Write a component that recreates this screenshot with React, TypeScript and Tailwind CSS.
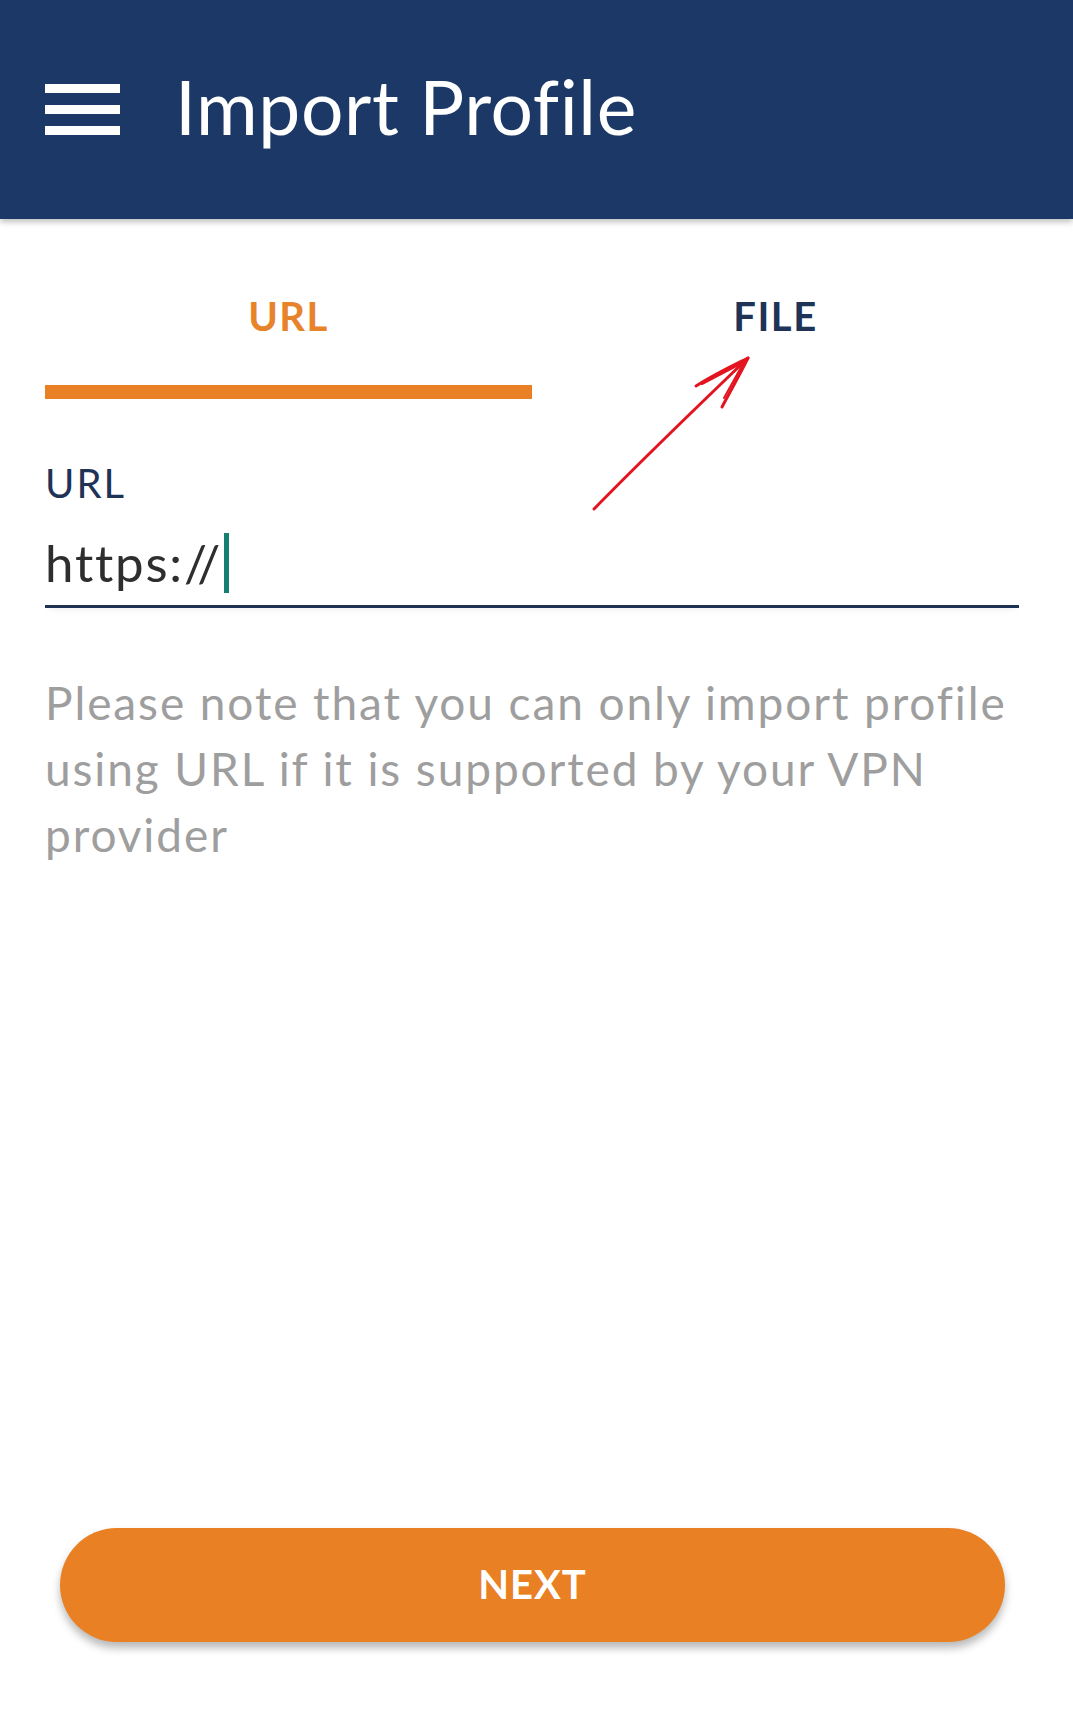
import React, { useState } from "react";

const Hamburger = () => (
  <div className="flex flex-col gap-[12px] w-[75px]">
    <span className="block h-[9px] w-full bg-white" />
    <span className="block h-[9px] w-full bg-white" />
    <span className="block h-[9px] w-full bg-white" />
  </div>
);

const Arrow = () => (
  <svg
    className="absolute left-0 top-0 pointer-events-none"
    width="1073"
    height="700"
    viewBox="0 0 1073 700"
    fill="none"
  >
    <path
      d="M594 509 C640 462 700 404 748 358"
      stroke="#e3141f"
      strokeWidth="3"
      strokeLinecap="round"
    />
    <path
      d="M696 386 C715 374 732 366 748 358 C740 374 730 392 722 407"
      stroke="#e3141f"
      strokeWidth="3"
      strokeLinecap="round"
      strokeLinejoin="round"
    />
    <path d="M702 384 L744 362 L724 398" stroke="#e3141f" strokeWidth="2" strokeLinecap="round" />
  </svg>
);

const App = () => {
  const [tab, setTab] = useState<"url" | "file">("url");

  return (
    <div className="relative min-h-[1717px] bg-white font-['Lato','Noto_Sans',sans-serif]">
      <header className="relative z-10 flex h-[219px] items-center bg-[#1c3866] px-[45px] shadow-[0_3px_6px_rgba(0,0,0,0.25)]">
        <Hamburger />
        <h1 className="ml-[55px] mb-[6px] text-[75px] font-normal leading-none tracking-[0.6px] text-white">
          Import Profile
        </h1>
      </header>

      <main className="pl-[45px] pr-[54px]">
        <div className="flex pt-[77px]">
          <button
            onClick={() => setTab("url")}
            className="flex flex-1 flex-col items-center"
          >
            <span className={`text-[40px] font-bold leading-none tracking-[1.5px] ${tab === "url" ? "text-[#e7832b]" : "text-[#1e3356]"}`}>
              URL
            </span>
            <span className={`mt-[49px] block h-[14px] w-full ${tab === "url" ? "bg-[#e98026]" : "bg-transparent"}`} />
          </button>
          <button
            onClick={() => setTab("file")}
            className="flex flex-1 flex-col items-center"
          >
            <span className={`text-[40px] font-bold leading-none tracking-[1.5px] ${tab === "file" ? "text-[#e7832b]" : "text-[#1e3356]"}`}>
              FILE
            </span>
            <span className={`mt-[49px] block h-[14px] w-full ${tab === "file" ? "bg-[#e98026]" : "bg-transparent"}`} />
          </button>
        </div>

        <label className="mt-[64px] block text-[40px] leading-none tracking-[2px] text-[#1e3356]">URL</label>
        <div className="mt-[30px] flex items-center border-b-[3px] border-[#1e3354] pb-[12px] shadow-[0_6px_6px_-4px_rgba(0,0,0,0.06)]">
          <span className="text-[51px] font-normal leading-[60px] tracking-[1.8px] text-[#2e2e2e]">https://</span>
          <span className="ml-[2px] block h-[60px] w-[5px] bg-[#168070]" />
        </div>

        <p className="mt-[62px] text-[46px] leading-[66px] tracking-[1.9px] text-[#9e9e9e]">
          Please note that you can only import profile
          <br />
          using URL if it is supported by your VPN
          <br />
          provider
        </p>
      </main>

      <div className="absolute left-[60px] right-[68px] top-[1528px]">
        <button className="flex h-[114px] w-full items-center justify-center rounded-full bg-[#e98024] shadow-[0_6px_8px_rgba(0,0,0,0.28)]">
          <span className="mb-[2px] text-[40px] font-bold leading-none tracking-wide text-white">NEXT</span>
        </button>
      </div>

      <Arrow />
    </div>
  );
};

export default App;
